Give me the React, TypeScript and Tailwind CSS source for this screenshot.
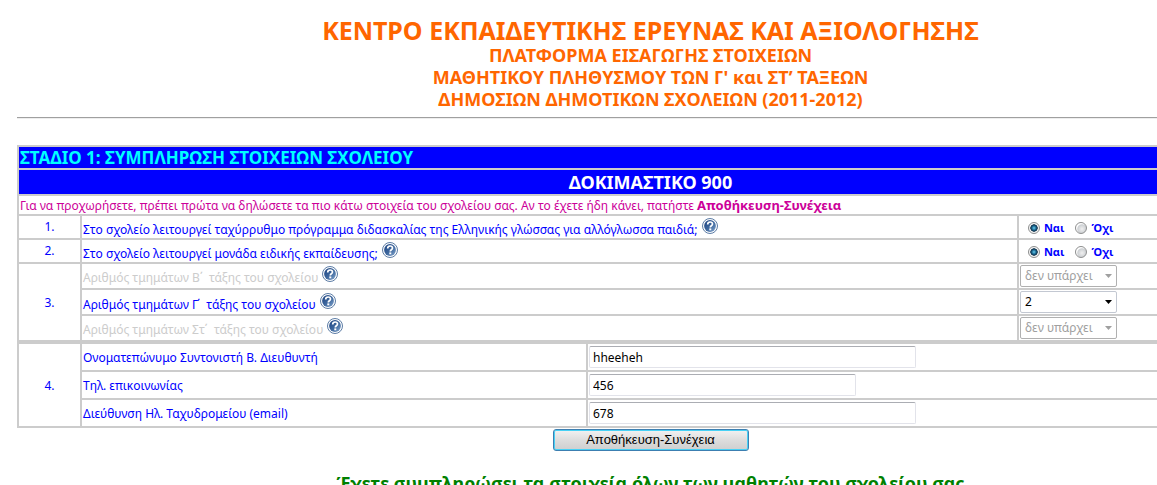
import { useState } from "react";
import type { ReactNode } from "react";

function HelpIcon() {
  return (
    <svg className="inline-block w-4 h-4 ml-1 align-baseline" viewBox="0 0 16 16" role="img" aria-label="Βοήθεια">
      <defs>
        <linearGradient id="help-fill" x1="0" y1="0" x2="1" y2="1">
          <stop offset="0" stopColor="#1c4280" />
          <stop offset="0.55" stopColor="#3f699f" />
          <stop offset="1" stopColor="#86a8cf" />
        </linearGradient>
      </defs>
      <circle cx="8" cy="8" r="7.5" fill="#fff" stroke="#4a6d9b" strokeWidth="0.9" />
      <circle cx="8" cy="8" r="5.9" fill="url(#help-fill)" />
      <path d="M5.7 6.4c0-1.5.9-2.4 2.4-2.4s2.4.9 2.4 2.1c0 1.7-2.2 1.6-2.2 3.3" fill="none" stroke="#fff" strokeWidth="1.7" />
      <rect x="7.3" y="10.4" width="2" height="1.9" fill="#fff" />
    </svg>
  );
}

function YesNo({ name, label }: { name: string; label: string }) {
  const [value, setValue] = useState("yes");
  const radio =
    "appearance-none w-3 h-3 rounded-full border border-[#8e8f8f] bg-[radial-gradient(circle_at_60%_60%,#f0f0f0_0,#cdd0d3_50%,#fff_62%)] checked:bg-[radial-gradient(circle_at_50%_50%,#6cd0f0_0,#1b6a94_28%,#0b2c45_48%,#f4f4f4_56%)]";
  return (
    <div role="radiogroup" aria-label={label} className="flex items-center pl-2 pt-0.5 text-[11px] leading-4 font-bold">
      <label className="flex items-center gap-1">
        <input type="radio" name={name} className={radio} checked={value === "yes"} onChange={() => setValue("yes")} />
        Ναι
      </label>
      <label className="flex items-center gap-1 ml-[11px]">
        <input type="radio" name={name} className={radio} checked={value === "no"} onChange={() => setValue("no")} />
        Όχι
      </label>
    </div>
  );
}

function ClassSelect({ id, options, disabled }: { id: string; options: string[]; disabled?: boolean }) {
  return (
    <div className="relative w-[97px]">
      <select
        id={id}
        disabled={disabled}
        className="appearance-none block w-full h-[22px] pl-1 border border-[#c3c8d2] rounded-[2px] bg-white text-[12px] leading-5 text-black disabled:border-[#b0b0b0] disabled:text-[#a0a0a0] disabled:opacity-100"
      >
        {options.map((o) => (
          <option key={o}>{o}</option>
        ))}
      </select>
      <svg className="absolute right-[5px] top-[9px] w-[7px] h-1 pointer-events-none" viewBox="0 0 7 4">
        <path d="M0 0h7L3.5 4z" fill={disabled ? "#a0a0a0" : "#000"} />
      </svg>
    </div>
  );
}

const cell = "border-2 border-[#ccc] p-0 px-px";

function Cell({ children, className = "" }: { children: ReactNode; className?: string }) {
  return <td className={`${cell} ${className}`}>{children}</td>;
}

const classRows = [
  { id: "class-b", label: "Αριθμός τμημάτων Β΄\u00a0 τάξης του σχολείου", options: ["δεν υπάρχει"], disabled: true },
  { id: "class-c", label: "Αριθμός τμημάτων Γ΄\u00a0 τάξης του σχολείου", options: ["2", "1", "3", "4"], disabled: false },
  { id: "class-st", label: "Αριθμός τμημάτων Στ΄\u00a0 τάξης του σχολείου", options: ["δεν υπάρχει"], disabled: true },
];

const contactRows = [
  { id: "coordinator", label: "Ονοματεπώνυμο Συντονιστή Β. Διευθυντή", value: "hheeheh", type: "text", width: "w-[327px]" },
  { id: "phone", label: "Τηλ. επικοινωνίας", value: "456", type: "text", width: "w-[267px]" },
  { id: "email", label: "Διεύθυνση Ηλ. Ταχυδρομείου (email)", value: "678", type: "text", width: "w-[327px]" },
];

export default function App() {
  return (
    <div className="h-screen overflow-hidden bg-white font-['Noto_Sans',sans-serif]">
      <main className="min-w-[1267px] ml-[17px] pt-4">
        <header className="text-center font-bold text-[#ff6600]">
          <h1 className="text-[25px] leading-7">ΚΕΝΤΡΟ ΕΚΠΑΙΔΕΥΤΙΚΗΣ ΕΡΕΥΝΑΣ ΚΑΙ ΑΞΙΟΛΟΓΗΣΗΣ</h1>
          <p className="text-[18px] leading-[22px]">
            ΠΛΑΤΦΟΡΜΑ ΕΙΣΑΓΩΓΗΣ ΣΤΟΙΧΕΙΩΝ
            <br />
            ΜΑΘΗΤΙΚΟΥ ΠΛΗΘΥΣΜΟΥ ΤΩΝ Γ' και ΣΤ’ ΤΑΞΕΩΝ
            <br />
            ΔΗΜΟΣΙΩΝ ΔΗΜΟΤΙΚΩΝ ΣΧΟΛΕΙΩΝ (2011-2012)
          </p>
        </header>
        <hr className="mt-[7px] mb-[26px] h-0.5 border-t border-t-[#a0a0a0] border-b border-b-[#eeeeee]" />

        <form onSubmit={(e) => e.preventDefault()}>
          <table className="w-full table-fixed border-collapse text-[12px] leading-4 text-[#0000ff]">
            <colgroup>
              <col className="w-[63px]" />
              <col className="w-[937px]" />
              <col />
            </colgroup>
            <tbody>
              <tr className="h-[23px] bg-[#0000ff]">
                <th colSpan={3} className={`${cell} text-left text-[17px] leading-5 text-[#00ffff]`}>
                  ΣΤΑΔΙΟ 1: ΣΥΜΠΛΗΡΩΣΗ ΣΤΟΙΧΕΙΩΝ ΣΧΟΛΕΙΟΥ
                </th>
              </tr>
              <tr className="h-[26px] bg-[#0000ff]">
                <th colSpan={3} className={`${cell} text-center text-[18px] leading-[22px] text-white`}>
                  ΔΟΚΙΜΑΣΤΙΚΟ 900
                </th>
              </tr>
              <tr className="h-5 text-[#cc0099]">
                <td colSpan={3} className={cell}>
                  Για να προχωρήσετε, πρέπει πρώτα να δηλώσετε τα πιο κάτω στοιχεία του σχολείου σας. Αν το έχετε ήδη κάνει, πατήστε{" "}
                  <b className="text-[13px]">Αποθήκευση-Συνέχεια</b>
                </td>
              </tr>
              <tr className="h-6">
                <Cell className="text-center">1.</Cell>
                <Cell className="pt-0.5">
                  Στο σχολείο λειτουργεί ταχύρρυθμο πρόγραμμα διδασκαλίας της Ελληνικής γλώσσας για αλλόγλωσσα παιδιά;
                  <HelpIcon />
                </Cell>
                <Cell>
                  <YesNo name="greek" label="Ταχύρρυθμο πρόγραμμα" />
                </Cell>
              </tr>
              <tr className="h-6">
                <Cell className="text-center">2.</Cell>
                <Cell className="pt-0.5">
                  Στο σχολείο λειτουργεί μονάδα ειδικής εκπαίδευσης;
                  <HelpIcon />
                </Cell>
                <Cell>
                  <YesNo name="special" label="Μονάδα ειδικής εκπαίδευσης" />
                </Cell>
              </tr>
              {classRows.map((row, i) => (
                <tr key={row.id} className="h-[26px]">
                  {i === 0 && (
                    <td rowSpan={3} className={`${cell} pt-0.5 text-center`}>
                      3.
                    </td>
                  )}
                  <Cell className={row.disabled ? "text-[#ccc]" : "pt-0.5"}>
                    <label htmlFor={row.id}>{row.label}</label>
                    <HelpIcon />
                  </Cell>
                  <Cell>
                    <ClassSelect id={row.id} options={row.options} disabled={row.disabled} />
                  </Cell>
                </tr>
              ))}
            </tbody>
          </table>

          <table className="w-full table-fixed border-collapse text-[12px] leading-4 text-[#0000ff]">
            <colgroup>
              <col className="w-[63px]" />
              <col className="w-[506px]" />
              <col />
            </colgroup>
            <tbody>
              {contactRows.map((row, i) => (
                <tr key={row.id} className="h-7">
                  {i === 0 && (
                    <td rowSpan={3} className={`${cell} pt-0.5 text-center`}>
                      4.
                    </td>
                  )}
                  <Cell className="pt-0.5">
                    <label htmlFor={row.id}>{row.label}</label>
                  </Cell>
                  <Cell>
                    <input
                      id={row.id}
                      type={row.type}
                      defaultValue={row.value}
                      className={`block h-[22px] px-[3px] border border-[#e2e3ea] border-t-[#abadb3] rounded-[2px] bg-white text-[12px] text-black ${row.width}`}
                    />
                  </Cell>
                </tr>
              ))}
            </tbody>
          </table>

          <button
            type="submit"
            className="block mx-auto mt-px w-[196px] h-[22px] rounded-[3px] border border-[#3c7fb1] bg-linear-to-b from-[#f2f2f2] from-0% via-[#dddddd] via-50% to-[#cfcfcf] text-[13px] leading-5 text-black font-['Liberation_Sans',sans-serif] shadow-[inset_0_0_0_1px_#48d1f5]"
          >
            Αποθήκευση-Συνέχεια
          </button>
        </form>

        <p className="mt-5 text-center text-[18px] leading-6 font-bold text-[#008000]">
          Έχετε συμπληρώσει τα στοιχεία όλων των μαθητών του σχολείου σας
        </p>
      </main>
    </div>
  );
}
